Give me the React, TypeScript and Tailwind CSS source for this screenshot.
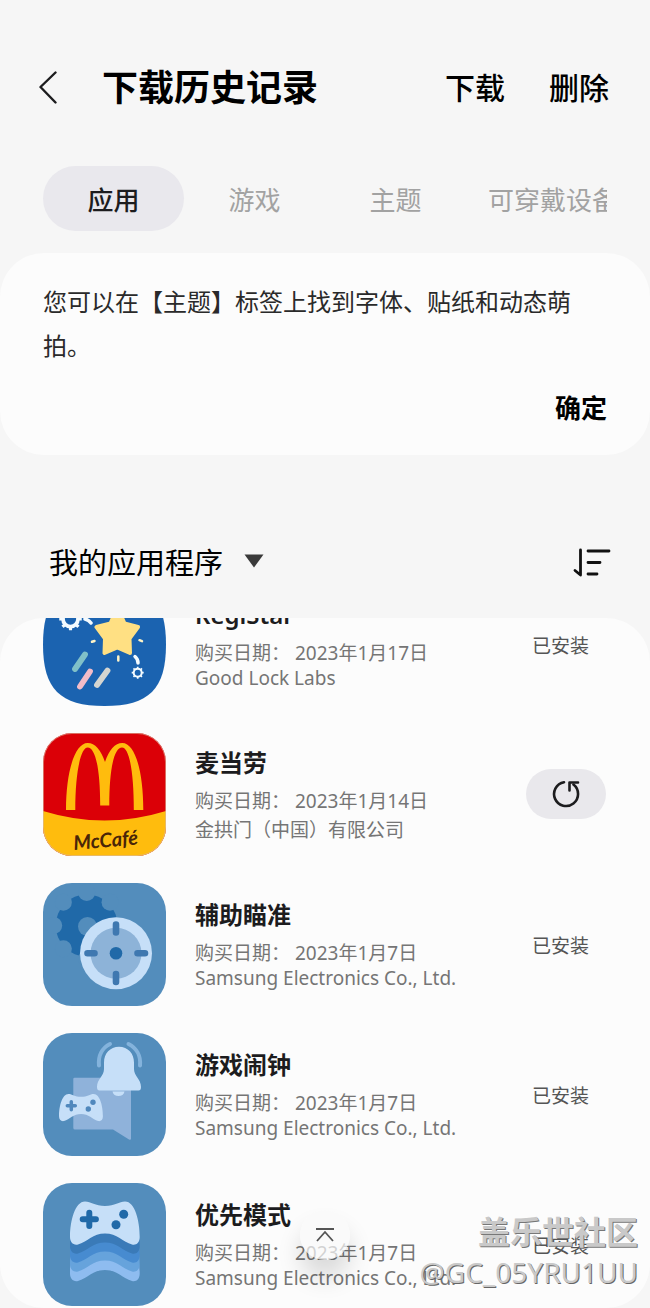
import type { ReactNode } from 'react';

interface AppEntry {
  name: string;
  date: string;
  developer: string;
  installed: boolean;
  icon: ReactNode;
}

const tabs = ['应用', '游戏', '主题'];

const CONTROLLER =
  'M42 18.5C48 18.5 52 23 62 23S76 18.5 82 18.5C92 18.5 96.7 38 96.7 54C96.7 60 93 62.5 89 61.5C80 59 74 50.5 62 50.5S44 59 35 61.5C30 62.5 27 59 27 54C27 38 32 18.5 42 18.5Z';

const EIGHTHS = [0, 45, 90, 135, 180, 225, 270, 315];

function RoundedIcon({ children }: { children: ReactNode }) {
  return (
    <svg viewBox="0 0 123 123" className="size-[123px] shrink-0" aria-hidden="true">
      <rect width="123" height="123" rx="29" fill="#538dbc" />
      {children}
    </svg>
  );
}

function Cog({ x, y, r }: { x: number; y: number; r: number }) {
  return (
    <g transform={`translate(${x} ${y})`} stroke="#f4fbff" fill="none">
      <circle r={r} strokeWidth={r * 0.5} />
      {EIGHTHS.map((a) => (
        <path key={a} d={`M0 ${-r}V${-r * 1.5}`} strokeWidth={r * 0.42} transform={`rotate(${a})`} />
      ))}
    </g>
  );
}

function RegiStarIcon() {
  return (
    <svg viewBox="0 0 123 123" className="size-[123px] shrink-0" aria-hidden="true">
      <path
        d="M0 61.5C0 17 17 0 61.5 0S123 17 123 61.5S106 123 61.5 123S0 106 0 61.5Z"
        fill="#1b63b0"
      />
      <Cog x={27.5} y={36} r={7.5} />
      <path d="M42 36Q46 37 48 40" stroke="#f4fbff" strokeWidth="3.5" strokeLinecap="round" fill="none" />
      <path
        d="M74.3 24L81.5 40.5L95 44L86.500 55.500L87 70L74.3 64.500L61.5 70L62 55.500L53.500 44L67.500 40.5Z"
        fill="#ffe083"
        stroke="#ffe083"
        strokeWidth="4"
        strokeLinejoin="round"
      />
      <g stroke="#fff4c7" strokeWidth="2.5" strokeLinecap="round" fill="none">
        <path d="M49 58.8L51.5 58M96.5 57.2L99 58.2M75.3 73.5V77.5" />
      </g>
      <path d="M92 73.5Q95 76 95 80" stroke="#f4fbff" strokeWidth="3.5" strokeLinecap="round" fill="none" />
      <Cog x={94.7} y={89.7} r={4} />
      <g strokeWidth="5.8" strokeLinecap="round">
        <path d="M42 71.5L32 86" stroke="#80c0c8" />
        <path d="M47 88.5L37 103.5" stroke="#f3bcc8" />
        <path d="M64.5 87.5L54 102" stroke="#d5d5d0" />
      </g>
    </svg>
  );
}

function McDonaldsIcon() {
  return (
    <svg viewBox="0 0 123 123" className="size-[123px] shrink-0" aria-hidden="true">
      <clipPath id="mc-clip">
        <rect width="123" height="123" rx="29" />
      </clipPath>
      <g clipPath="url(#mc-clip)">
        <rect width="123" height="123" fill="#db0007" />
        <path d="M0 78Q61.5 97 123 78V123H0Z" fill="#ffbc0d" />
      </g>
      <rect x="0.5" y="0.5" width="122" height="122" rx="28.5" fill="none" stroke="#d9b9a0" strokeOpacity="0.6" />
      <path
        d="M23 77C23 38 32 10 44.7 10C52 10 58 17 62 29C66 17 72 10 79.3 10C92 10 100.3 38 100.3 77H90.8C90.8 40 86.5 14.5 79 14.5C71.5 14.5 66.3 34 66.3 72.5H57.2C57.2 34 52 14.5 44.7 14.5C37.5 14.5 32.3 40 32.3 77Z"
        fill="#ffbc0d"
      />
      <text
        x="31"
        y="117"
        transform="rotate(-5 31 117)"
        fontFamily="Lato, sans-serif"
        fontSize="20"
        fontStyle="italic"
        fontWeight="700"
        fill="#4a2508"
      >
        McCafé
      </text>
    </svg>
  );
}

function AimIcon() {
  return (
    <RoundedIcon>
      <circle cx="43.7" cy="42.5" r="31" fill="#2069a8" />
      {EIGHTHS.map((a) => (
        <circle key={a} cx="43.7" cy="9.5" r="8.5" fill="#538dbc" transform={`rotate(${a} 43.7 42.5)`} />
      ))}
      <circle cx="44.5" cy="43.5" r="9.5" fill="#538dbc" />
      <circle cx="73" cy="70.3" r="36" fill="#c6dff8" />
      <circle cx="73" cy="70.3" r="25.5" fill="#8db3d8" />
      <circle cx="73" cy="70.3" r="6.3" fill="#2069a8" />
      <path
        d="M73 41.5V49.5M73 91V99M44.5 70.3H51.5M94.5 70.3H102"
        stroke="#3f78b0"
        strokeWidth="6.6"
        strokeLinecap="round"
      />
    </RoundedIcon>
  );
}

function AlarmIcon() {
  return (
    <RoundedIcon>
      <path
        d="M31.5 44.7H86.5Q88 44.7 88 46.5V105.5Q88 107.5 86 106.5L70 96.5H32Q30.3 96.5 30.3 95V46Q30.3 44.7 31.5 44.7Z"
        fill="#8fb2da"
      />
      <path
        d="M56 32.5C55 23 59 15 67 11M97 32.5C98 23 93.5 15 85.5 11"
        stroke="#84b3dc"
        strokeWidth="4"
        strokeLinecap="round"
        fill="none"
      />
      <path d="M69.5 58.5H81.5C81 61.5 78.5 63 75.5 63S70 61.5 69.5 58.5Z" fill="#c6dff8" />
      <path
        d="M76 13.7C67 13.7 61 20.5 61 29.5V36C61 43 54 46 54 54Q54 57.5 56.5 57.5H95.5Q98 57.5 98 54C98 46 91 43 91 36V29.5C91 20.5 85 13.7 76 13.7Z"
        fill="#c6dff8"
      />
      <path d={CONTROLLER} transform="translate(-1 49.3) scale(0.63)" fill="#c6dff8" />
      <path d="M28.3 68.7V76.7M24.3 72.7H32.3" stroke="#5088bd" strokeWidth="3.5" strokeLinecap="round" />
      <circle cx="50" cy="69.3" r="2.7" fill="#5088bd" />
      <circle cx="45.3" cy="76" r="2.7" fill="#5088bd" />
    </RoundedIcon>
  );
}

function PriorityIcon() {
  return (
    <RoundedIcon>
      <path d={CONTROLLER} transform="translate(0 36.5)" fill="#8ebcf0" />
      <path d={CONTROLLER} transform="translate(0 27)" fill="#66a3dc" />
      <path d={CONTROLLER} transform="translate(0 18)" fill="#478bd0" />
      <path d={CONTROLLER} transform="translate(0 9)" fill="#3a7ab8" />
      <path d={CONTROLLER} fill="#c6dff8" />
      <path d="M46.3 29.7V42.9M39.7 36.3H52.9" stroke="#2069a8" strokeWidth="6" strokeLinecap="round" />
      <circle cx="80.7" cy="31.3" r="4.5" fill="#2069a8" />
      <circle cx="73" cy="41.7" r="4.5" fill="#2069a8" />
    </RoundedIcon>
  );
}

const apps: AppEntry[] = [
  { name: 'RegiStar', date: '2023年1月17日', developer: 'Good Lock Labs', installed: true, icon: <RegiStarIcon /> },
  { name: '麦当劳', date: '2023年1月14日', developer: '金拱门（中国）有限公司', installed: false, icon: <McDonaldsIcon /> },
  { name: '辅助瞄准', date: '2023年1月7日', developer: 'Samsung Electronics Co., Ltd.', installed: true, icon: <AimIcon /> },
  { name: '游戏闹钟', date: '2023年1月7日', developer: 'Samsung Electronics Co., Ltd.', installed: true, icon: <AlarmIcon /> },
  { name: '优先模式', date: '2023年1月7日', developer: 'Samsung Electronics Co., Ltd.', installed: true, icon: <PriorityIcon /> },
];

function AppRow({ app }: { app: AppEntry }) {
  return (
    <li className="flex h-[150px] items-center pl-[43px] pr-11">
      {app.icon}
      <div className="ml-[29px] min-w-0 flex-1 whitespace-nowrap text-[19px] text-[#757575]">
        <h2 className="mb-2 text-2xl leading-[34px] font-semibold text-[#1c1c1e]">{app.name}</h2>
        <p className="leading-[26px]">购买日期： {app.date}</p>
        <p className={app.installed ? 'leading-6' : 'mt-1 leading-6'}>{app.developer}</p>
      </div>
      <div className="w-20 shrink-0">
        {app.installed ? (
          <span className="block pt-1 pl-1.5 text-[19px] leading-6 text-[#555555]">已安装</span>
        ) : (
          <button
            type="button"
            aria-label="重新安装"
            className="flex h-[50px] w-full items-center justify-center rounded-full bg-[#e9e8ec]"
          >
            <svg viewBox="0 0 28 28" className="size-7" fill="none" stroke="#1c1c1e" strokeWidth="2.6">
              <path d="M12 2.2A12 12 0 1 0 21.5 4.6" strokeLinecap="round" />
              <path d="M17.5 10.5V2.5H26" strokeLinecap="round" strokeLinejoin="round" />
            </svg>
          </button>
        )}
      </div>
    </li>
  );
}

export default function App() {
  return (
    <div className="relative flex h-screen flex-col overflow-hidden bg-[#f6f6f6] font-['Noto_Sans','Noto_Sans_CJK_SC',sans-serif] text-black">
      <header className="mt-[60px] flex h-14 shrink-0 items-center pl-[39px] pr-[41px] font-medium">
        <button type="button" aria-label="返回" className="shrink-0">
          <svg viewBox="0 0 18 34" className="h-[34px] w-[18px]" fill="none" stroke="#1c1c1e" strokeWidth="2.4">
            <path d="M16.5 1.5L1.5 16L16.5 31.5" strokeLinecap="round" strokeLinejoin="round" />
          </svg>
        </button>
        <h1 className="ml-[45px] flex-1 text-4xl font-semibold">下载历史记录</h1>
        <div className="flex gap-11 text-3xl">
          <button type="button">下载</button>
          <button type="button">删除</button>
        </div>
      </header>

      <nav className="mx-[43px] mt-[50px] flex h-[65px] shrink-0 overflow-hidden whitespace-nowrap text-[26px]">
        {tabs.map((tab, i) => (
          <button
            key={tab}
            type="button"
            className={
              i === 0
                ? 'w-[141px] shrink-0 rounded-full bg-[#e9e8ed] pt-1 font-medium text-[#1c1c1e]'
                : 'w-[141px] shrink-0 pt-1 text-[#a2a2a2]'
            }
          >
            {tab}
          </button>
        ))}
        <button type="button" className="shrink-0 px-[22px] pt-1 text-[#a2a2a2]">
          可穿戴设备
        </button>
      </nav>

      <section className="mt-[22px] flex shrink-0 flex-col rounded-[44px] bg-[#fcfcfc] px-[43px] pt-[27px] pb-[26px]">
        <p className="text-2xl leading-11 text-[#2a2a2a]">
          您可以在【主题】标签上找到字体、贴纸和动态萌拍。
        </p>
        <button type="button" className="mt-[19px] self-end text-[26px] leading-[42px] font-semibold">
          确定
        </button>
      </section>

      <div className="mt-[78px] mb-[25px] flex h-[60px] shrink-0 items-center justify-between pl-[49px] pr-[39px]">
        <label className="flex items-center">
          <span className="sr-only">列表筛选</span>
          <select className="appearance-none bg-transparent text-[29px] leading-[44px] outline-none">
            <option>我的应用程序</option>
          </select>
          <svg viewBox="0 0 20 18" className="ml-5 h-[18px] w-5" aria-hidden="true">
            <path d="M0.5 0.5H19.5L10 13.5Z" fill="#3a3a3a" />
          </svg>
        </label>
        <button type="button" aria-label="排序">
          <svg viewBox="0 0 38 30" className="h-[30px] w-[38px]" fill="none" stroke="#111" strokeWidth="2.8">
            <path d="M2 22.5L7.5 27V2M15 3H36M15 14.5H27M15 26H24" strokeLinecap="round" strokeLinejoin="round" />
          </svg>
        </button>
      </div>

      <main className="min-h-0 flex-1 overflow-hidden rounded-[44px] bg-[#fcfcfc]">
        <ul className="-mt-[49px]">
          {apps.map((app) => (
            <AppRow key={app.name} app={app} />
          ))}
        </ul>
      </main>

      <button
        type="button"
        aria-label="回到顶部"
        className="absolute bottom-12 left-1/2 flex size-[50px] -translate-x-1/2 items-center justify-center rounded-full bg-[#fafafa]/70 shadow-[0_18px_24px_rgba(0,0,0,0.14)]"
      >
        <svg viewBox="0 0 20 16" className="h-4 w-5" fill="none" stroke="#555" strokeWidth="1.8">
          <path d="M1 2H19M2 14L10 5L18 14" />
        </svg>
      </button>

      <div className="pointer-events-none absolute right-3 bottom-[18px] text-right whitespace-nowrap text-[#c9c9c9]">
        <p className="text-[32px] leading-[44px] font-semibold [text-shadow:1px_1px_0_#777]">盖乐世社区</p>
        <p className="text-[28px] leading-9 [text-shadow:1px_1px_0_#666]">@GC_05YRU1UU</p>
      </div>
    </div>
  );
}
